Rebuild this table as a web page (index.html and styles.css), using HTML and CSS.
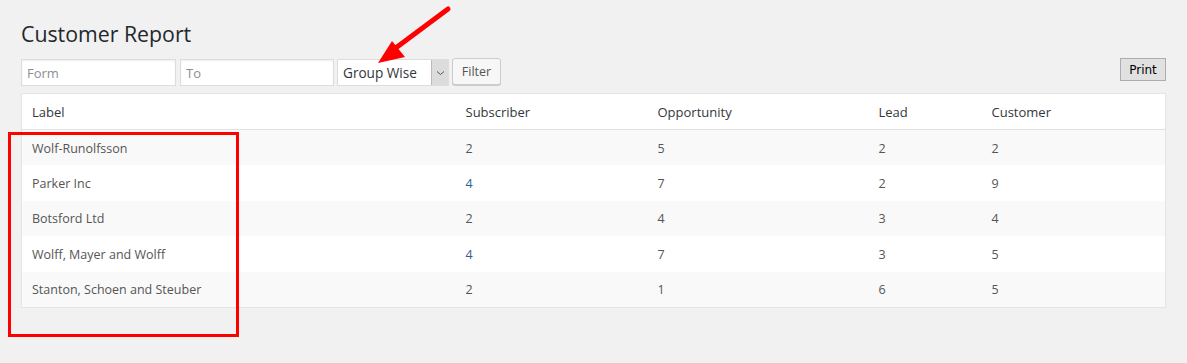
FILE: index.html
```html
<!DOCTYPE html>
<html>
<head>
<meta charset="utf-8">
<link rel="stylesheet" href="styles.css">
</head>
<body>
<div class="wrap">
  <h1 class="title">Customer Report</h1>
  <div class="toolbar">
    <input class="field" type="text" placeholder="Form">
    <input class="field" type="text" placeholder="To">
    <div class="select">
      <span class="select-text">Group Wise</span>
      <span class="select-arrow"><svg width="9" height="6" viewBox="0 0 9 6"><path d="M1 1.5 L4.5 4.5 L8 1.5" fill="none" stroke="#555" stroke-width="1"/></svg></span>
    </div>
    <button class="btn-filter">Filter</button>
    <button class="btn-print">Print</button>
  </div>
  <table class="report">
    <colgroup>
      <col class="c-label"><col class="c-sub"><col class="c-opp"><col class="c-lead"><col class="c-cust">
    </colgroup>
    <thead>
      <tr><th>Label</th><th>Subscriber</th><th>Opportunity</th><th>Lead</th><th>Customer</th></tr>
    </thead>
    <tbody>
      <tr class="alt"><td>Wolf-Runolfsson</td><td>2</td><td>5</td><td>2</td><td>2</td></tr>
      <tr><td>Parker Inc</td><td class="link">4</td><td>7</td><td>2</td><td>9</td></tr>
      <tr class="alt"><td>Botsford Ltd</td><td>2</td><td>4</td><td>3</td><td>4</td></tr>
      <tr><td>Wolff, Mayer and Wolff</td><td class="link">4</td><td>7</td><td>3</td><td>5</td></tr>
      <tr class="alt"><td>Stanton, Schoen and Steuber</td><td>2</td><td>1</td><td>6</td><td>5</td></tr>
    </tbody>
  </table>
</div>
<div class="annot-box"></div>
<svg class="annot-arrow" width="90" height="70" viewBox="0 0 90 70">
  <line x1="80" y1="9" x2="25" y2="50" stroke="#f00" stroke-width="5" stroke-linecap="round"/>
  <polygon points="10,63 24,41 37,57" fill="#f00"/>
</svg>
</body>
</html>
```
FILE: styles.css
```css
html, body {
  margin: 0;
  padding: 0;
  background: #f1f1f1;
  font-family: "Open Sans", "Noto Sans", sans-serif;
  color: #444;
}
.wrap {
  padding: 0 21px 0 21px;
  width: 1145px;
}
.title {
  margin: 0;
  padding: 18px 0 0 0;
  font-size: 21.3px;
  font-weight: 400;
  line-height: 32px;
  color: #23282d;
  height: 40px;
}
.toolbar {
  display: flex;
  align-items: flex-start;
  gap: 4px;
  height: 35px;
}
.field {
  box-sizing: border-box;
  width: 155px;
  height: 27px;
  margin: 1px 0 0 0;
  border: 1px solid #ddd;
  background: #fff;
  box-shadow: inset 0 1px 2px rgba(0,0,0,0.07);
  padding: 0 5px;
  font-family: inherit;
  font-size: 13px;
  color: #32373c;
  outline: none;
}
.field + .field { width: 154px; }
.field::placeholder { color: #8a8f94; }
.select {
  box-sizing: border-box;
  width: 112px;
  height: 27px;
  margin-top: 1px;
  margin-left: -1px;
  border: 1px solid #ddd;
  background: #fff;
  display: flex;
  align-items: stretch;
}
.select-text {
  flex: 1;
  padding-left: 5px;
  font-size: 13.6px;
  line-height: 25px;
  color: #32373c;
}
.select-arrow {
  width: 16px;
  background: #dcdcdc;
  border-left: 1px solid #bbb;
  display: flex;
  align-items: center;
  justify-content: center;
}
.btn-filter {
  box-sizing: border-box;
  height: 27px;
  width: 49px;
  margin-left: -1px;
  padding: 0;
  border: 1px solid #ccc;
  border-radius: 3px;
  background: #f7f7f7;
  box-shadow: 0 1px 0 #ccc;
  font-family: inherit;
  font-size: 12.5px;
  color: #555;
}
.btn-print {
  margin-left: auto;
  box-sizing: border-box;
  height: 23px;
  width: 46px;
  padding: 0;
  border: 1px solid #adadad;
  background: #e1e1e1;
  font-family: "DejaVu Sans", sans-serif;
  font-size: 12px;
  color: #000;
}
.report {
  width: 1145px;
  border-collapse: collapse;
  background: #fff;
  border: 1px solid #e5e5e5;
  box-shadow: 0 1px 1px rgba(0,0,0,0.04);
  table-layout: fixed;
}
.c-label { width: 434px; }
.c-sub { width: 192px; }
.c-opp { width: 221px; }
.c-lead { width: 113px; }
.c-cust { width: auto; }
.report th {
  text-align: left;
  font-weight: 400;
  font-size: 13px;
  color: #32373c;
  height: 35px;
  padding: 0 10px;
  border-bottom: 1px solid #e1e1e1;
}
.report td {
  font-size: 12.5px;
  color: #555;
  height: 35.5px;
  padding: 1px 10px 0 10px;
  box-sizing: border-box;
}
.report td.link { color: #2f5f8f; }
.report tr.alt td { background: #f9f9f9; }
.annot-box {
  position: absolute;
  left: 8px;
  top: 132px;
  width: 225px;
  height: 199px;
  border: 3px solid #f00;
}
.annot-arrow {
  position: absolute;
  left: 368px;
  top: 0;
}
```
